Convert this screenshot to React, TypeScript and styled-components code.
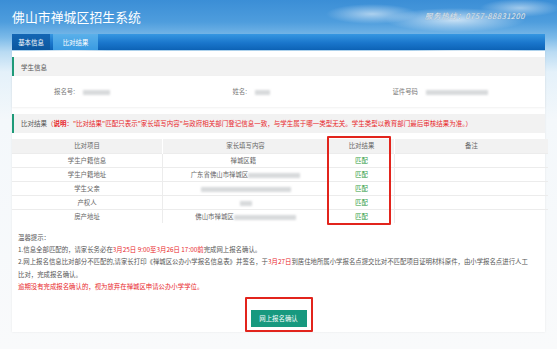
import { FC } from 'react';
import styled, { createGlobalStyle } from 'styled-components';

const GlobalStyle = createGlobalStyle`
  html, body {
    margin: 0;
    padding: 0;
    background: #f7f9fb;
  }
  body {
    font-family: "Noto Sans CJK SC", "Noto Sans", "Liberation Sans", sans-serif;
  }
`;

const Page = styled.div`
  position: relative;
  width: 557px;
  height: 349px;
  overflow: hidden;
  background:
    radial-gradient(ellipse 46px 10px at 372px 14px, rgba(255, 255, 255, 0.55), transparent),
    radial-gradient(ellipse 70px 12px at 455px 20px, rgba(255, 255, 255, 0.7), transparent),
    radial-gradient(ellipse 40px 9px at 520px 8px, rgba(255, 255, 255, 0.5), transparent),
    radial-gradient(ellipse 40px 10px at 70px 54px, rgba(255, 255, 255, 0.9), transparent),
    radial-gradient(ellipse 60px 10px at 470px 53px, rgba(255, 255, 255, 0.8), transparent),
    linear-gradient(180deg, #3b8ed6 0px, #4e9ddd 22px, #7dbbe9 38px, #b9dbf3 52px, #e4f1fa 72px, #f4f8fb 120px, #f9fafb 100%);
`;

const Header = styled.div`
  display: flex;
  align-items: center;
  justify-content: space-between;
  height: 34px;
  padding: 0 32px 0 12px;
`;

const Title = styled.div`
  color: #fff;
  font-size: 12.8px;
  letter-spacing: 0.1px;
  margin-top: -2px;
`;

const Hotline = styled.div`
  color: #e3ecf4;
  font-size: 7.6px;
  font-style: italic;
  letter-spacing: 0.5px;
  text-shadow: 0 0 1px #6f8ea8;
  margin-top: -3px;
`;

const NavBar = styled.div`
  display: flex;
  gap: 3px;
  height: 16px;
  margin: 0 12px;
  background: linear-gradient(180deg, #3597e2 0%, #1a76cc 55%, #0d63b6 100%);
`;

const NavTab = styled.div<{ active?: boolean; width: number }>`
  display: flex;
  align-items: center;
  justify-content: center;
  width: ${(p) => p.width}px;
  font-size: 6.4px;
  color: #fff;
  background: ${(p) =>
    p.active ? 'linear-gradient(180deg, #5ab0ea 0%, #3a9be2 100%)' : 'linear-gradient(180deg, #1466b4 0%, #0b579f 100%)'};
`;

const Panel = styled.div`
  display: flex;
  flex-direction: column;
  margin: 1px 12px 0;
  height: 281px;
  padding-top: 6px;
  box-sizing: border-box;
  background: #fff;
  box-shadow: 0 0 2px rgba(0, 0, 0, 0.08);
`;

const SectionHeader = styled.div<{ gapTop?: number }>`
  display: flex;
  align-items: center;
  height: 20px;
  margin-top: ${(p) => p.gapTop || 0}px;
  padding-left: 7px;
  background: #f2f2f2;
  border-left: 2px solid #1e9a78;
  font-size: 6.5px;
  color: #555;
  white-space: nowrap;
`;

const Warn = styled.span<{ bold?: boolean }>`
  color: #e8262a;
  font-weight: ${(p) => (p.bold ? 700 : 400)};
`;

const InfoCard = styled.div`
  display: grid;
  grid-template-columns: 63px 114px 58px 117px 54px 1fr;
  align-items: center;
  height: 32px;
  box-shadow: 0 1px 2px rgba(0, 0, 0, 0.06);
  font-size: 6.4px;
  color: #777;
`;

const InfoLabel = styled.div`
  text-align: right;
`;

const InfoValue = styled.div`
  padding-left: 8px;
`;

const Blur = styled.span<{ width: number }>`
  display: inline-block;
  width: ${(p) => p.width}px;
  height: 5px;
  vertical-align: middle;
  background: #d4d6d8;
  filter: blur(1.2px);
  opacity: 0.9;
`;

const TableWrap = styled.div`
  position: relative;
  margin-top: 6px;
`;

const Table = styled.table`
  width: 100%;
  border-collapse: collapse;
  table-layout: fixed;
  font-size: 6.4px;
  color: #666;
`;

const HeadCell = styled.th<{ width: number }>`
  width: ${(p) => p.width}px;
  height: 14px;
  padding: 0;
  font-weight: 400;
  background: #f2f2f2;
  border-left: 1px solid #fff;
  &:first-child {
    border-left: none;
  }
`;

const Cell = styled.td<{ match?: boolean }>`
  height: 13px;
  padding: 0;
  text-align: center;
  border-top: 1px solid #ececec;
  border-left: 1px solid #ececec;
  color: ${(p) => (p.match ? '#2e9a3c' : '#666')};
  white-space: nowrap;
  &:first-child {
    border-left: none;
  }
`;

const MarkBox = styled.div<{ left: number; top: number; width: number; height: number }>`
  position: absolute;
  left: ${(p) => p.left}px;
  top: ${(p) => p.top}px;
  width: ${(p) => p.width}px;
  height: ${(p) => p.height}px;
  box-sizing: border-box;
  border: 2px solid #e2241c;
  border-radius: 1px;
  pointer-events: none;
`;

const Notes = styled.div`
  display: flex;
  flex-direction: column;
  margin-top: 9px;
  padding-left: 6px;
  font-size: 6.4px;
  line-height: 12.2px;
  color: #555;
`;

const NoteLine = styled.div<{ red?: boolean }>`
  white-space: nowrap;
  color: ${(p) => (p.red ? '#e8262a' : 'inherit')};
`;

const Red = styled.span`
  color: #e8262a;
`;

const ButtonRow = styled.div`
  display: flex;
  justify-content: center;
  margin-top: 4px;
`;

const ButtonMark = styled.div`
  padding: 3px 4px;
  border: 2px solid #e2241c;
  border-radius: 1px;
`;

const ConfirmButton = styled.button`
  width: 56px;
  height: 17px;
  padding: 0;
  border: none;
  background: #17997f;
  color: #fff;
  font-family: inherit;
  font-size: 6.4px;
  cursor: pointer;
`;

type Row = { item: string; content: React.ReactNode };

const rows: Row[] = [
  { item: '学生户籍信息', content: <>禅城区籍&nbsp;&nbsp;&nbsp;</> },
  {
    item: '学生户籍地址',
    content: (
      <>
        广东省佛山市禅城区<Blur width={52} />
      </>
    ),
  },
  { item: '学生父亲', content: <Blur width={90} /> },
  { item: '产权人', content: <Blur width={12} /> },
  {
    item: '房产地址',
    content: (
      <>
        佛山市禅城区<Blur width={62} />
      </>
    ),
  },
];

const App: FC = () => {
  return (
    <Page>
      <GlobalStyle />
      <Header>
        <Title>佛山市禅城区招生系统</Title>
        <Hotline>服务热线：0757-88831200</Hotline>
      </Header>

      <NavBar>
        <NavTab width={38}>基本信息</NavTab>
        <NavTab width={45} active>
          比对结果
        </NavTab>
      </NavBar>

      <Panel>
        <SectionHeader>学生信息</SectionHeader>
        <InfoCard>
          <InfoLabel>报名号:</InfoLabel>
          <InfoValue>
            <Blur width={27} />
          </InfoValue>
          <InfoLabel>姓名:</InfoLabel>
          <InfoValue>
            <Blur width={15} />
          </InfoValue>
          <InfoLabel>证件号码</InfoLabel>
          <InfoValue>
            <Blur width={62} />
          </InfoValue>
        </InfoCard>

        <SectionHeader gapTop={7}>
          比对结果
          <Warn>
            （<Warn bold>说明</Warn>："比对结果"匹配只表示"家长填写内容"与政府相关部门登记信息一致，与学生属于哪一类型无关。学生类型以教育部门最后审核结果为准。）
          </Warn>
        </SectionHeader>

        <TableWrap>
          <Table>
            <thead>
              <tr>
                <HeadCell width={150}>比对项目</HeadCell>
                <HeadCell width={165}>家长填写内容</HeadCell>
                <HeadCell width={65}>比对结果</HeadCell>
                <HeadCell width={153}>备注</HeadCell>
              </tr>
            </thead>
            <tbody>
              {rows.map((row) => (
                <tr key={row.item}>
                  <Cell>{row.item}</Cell>
                  <Cell>{row.content}</Cell>
                  <Cell match>匹配</Cell>
                  <Cell />
                </tr>
              ))}
            </tbody>
          </Table>
          <MarkBox left={315} top={-3} width={64} height={89} />
        </TableWrap>

        <Notes>
          <NoteLine>温馨提示：</NoteLine>
          <NoteLine>
            1.信息全部匹配的，请家长务必在<Red>3月25日 9:00至3月26日 17:00前</Red>完成网上报名确认。
          </NoteLine>
          <NoteLine>
            2.网上报名信息比对部分不匹配的,请家长打印《禅城区公办小学报名信息表》并签名，于<Red>3月27日</Red>
            到居住地所属小学报名点提交比对不匹配项目证明材料原件，由小学报名点进行人工
          </NoteLine>
          <NoteLine>比对，完成报名确认。</NoteLine>
          <NoteLine red>逾期没有完成报名确认的，视为放弃在禅城区申请公办小学学位。</NoteLine>
        </Notes>

        <ButtonRow>
          <ButtonMark>
            <ConfirmButton>网上报名确认</ConfirmButton>
          </ButtonMark>
        </ButtonRow>
      </Panel>
    </Page>
  );
};

export default App;
